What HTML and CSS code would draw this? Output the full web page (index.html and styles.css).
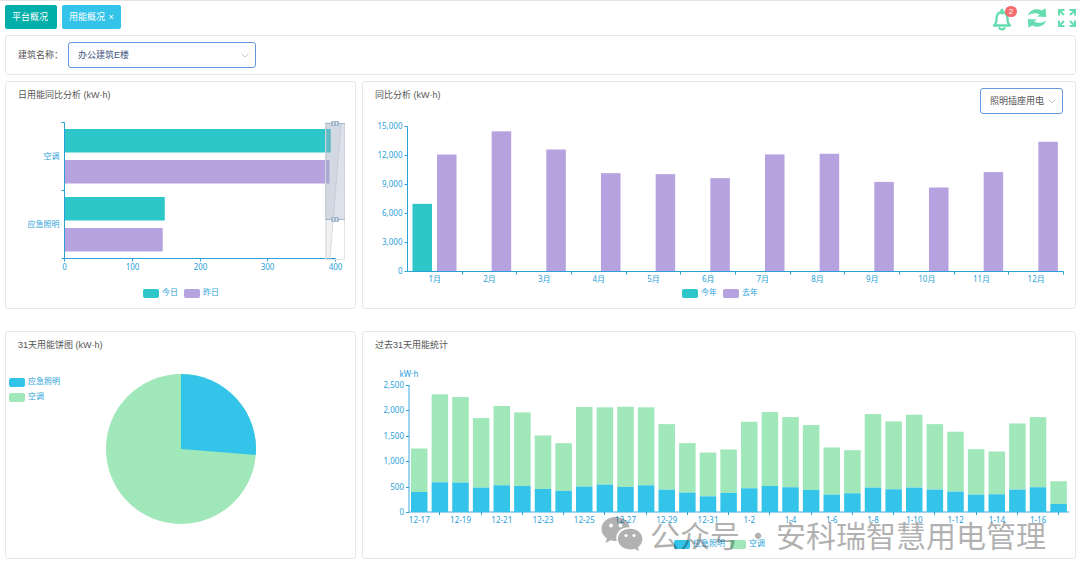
FILE: index.html
```html
<!DOCTYPE html>
<html lang="zh-CN">
<head>
<meta charset="utf-8">
<meta name="viewport" content="width=device-width, initial-scale=1">
<title>用能概况</title>
<link rel="stylesheet" href="styles.css">
</head>
<body>
<header class="topbar">
  <nav class="tabs">
    <button class="tab tab-home" type="button">平台概况</button>
    <button class="tab tab-current" type="button">用能概况 <span class="tab-close">×</span></button>
  </nav>
  <div class="tools">
    <button class="tool" type="button" aria-label="消息">
      <svg viewBox="0 0 20 24" width="20" height="24" fill="none" stroke="currentColor" stroke-width="2.4" stroke-linejoin="round">
        <path d="M2 17.500C4 16 4.500 14 4.500 10.500C4.500 6.500 6.500 4.300 10 4.300C13.500 4.300 15.500 6.500 15.500 10.500C15.500 14 16 16 18 17.500Z"/>
        <path d="M10 2.200V5" stroke-width="3.200" stroke-linecap="round"/>
        <path d="M6.800 19.500Q10 23.500 13.200 19.500" stroke-width="2.400"/>
      </svg>
      <span class="badge">2</span>
    </button>
    <button class="tool" type="button" aria-label="刷新">
      <svg viewBox="0 0 20 20" width="20" height="20" fill="currentColor">
        <path d="M0.800 7.500C3 1.500 9 -0.200 14.800 2.600L18.600 0.200L19.200 9L10 8.600L12.800 6.400C9 4.400 4.500 5 0.800 7.500Z"/>
        <path d="M19.200 12.500C17 18.500 11 20.200 5.200 17.400L1.400 19.800L0.800 11L10 11.400L7.200 13.600C11 15.600 15.500 15 19.200 12.500Z"/>
      </svg>
    </button>
    <button class="tool" type="button" aria-label="全屏">
      <svg viewBox="0 0 20 20" width="20" height="20" fill="none" stroke="currentColor" stroke-width="2">
        <path d="M2 7.500V2H7.500M2.500 2.500L7 7M12.500 2H18V7.500M17.500 2.500L13 7M2 12.500V18H7.500M2.500 17.500L7 13M12.500 18H18V12.500M17.500 17.500L13 13"/>
      </svg>
    </button>
  </div>
</header>

<main class="page">
  <section class="panel filter">
    <label for="building">建筑名称：</label>
    <div class="picker picker-wide">
      <select id="building"><option>办公建筑E楼</option></select>
      <svg class="chevron" viewBox="0 0 8 5" width="8" height="5"><path d="M0.500 0.500L4 4L7.500 0.500"/></svg>
    </div>
  </section>

  <div class="charts">
    <section class="panel">
      <h2>日用能同比分析 (kW·h)</h2>
      <svg class="chart" id="daily" viewBox="0 0 349 200" role="img" aria-label="日用能同比分析"></svg>
    </section>
    <section class="panel">
      <h2>同比分析 (kW·h)</h2>
      <div class="picker picker-corner">
        <select aria-label="用电类型"><option>照明插座用电</option></select>
        <svg class="chevron" viewBox="0 0 8 5" width="8" height="5"><path d="M0.500 0.500L4 4L7.500 0.500"/></svg>
      </div>
      <svg class="chart" id="yearly" viewBox="0 0 712 200" role="img" aria-label="同比分析"></svg>
    </section>
    <section class="panel">
      <h2>31天用能饼图 (kW·h)</h2>
      <svg class="chart" id="share" viewBox="0 0 349 200" role="img" aria-label="31天用能饼图"></svg>
    </section>
    <section class="panel">
      <h2>过去31天用能统计</h2>
      <svg class="chart" id="history" viewBox="0 0 712 200" role="img" aria-label="过去31天用能统计"></svg>
      <div class="watermark">
        <svg viewBox="0 0 42 36" width="42" height="36">
          <path fill="#000" d="M14.500 1C6.500 1 0.500 6 0.500 13C0.500 17 2.500 20.200 5.800 22.300L4.500 27L9.800 24.300C11.800 25 13.800 25.200 15.800 25C13.500 17 19.500 11 28.500 11.200C27.500 5 21.500 1 14.500 1Z"/>
          <path fill="#000" d="M29 12.800C21.800 12.800 16.900 17.300 16.900 23.100C16.900 28.900 21.800 33.400 29 33.400C30.700 33.400 32.200 33.100 33.600 32.700L38 35.200L36.900 31.200C39.800 29.200 41.400 26.300 41.400 23.100C41.400 17.300 36.200 12.800 29 12.800Z"/>
          <g fill="#fff"><circle cx="10" cy="9.500" r="1.900"/><circle cx="19.500" cy="9.500" r="1.900"/><circle cx="25" cy="19.500" r="1.600"/><circle cx="33" cy="19.500" r="1.600"/></g>
        </svg>
        <span>公众号</span><span>·</span><span>安科瑞智慧用电管理</span>
      </div>
    </section>
  </div>
</main>
<script src="charts.js"></script>
</body>
</html>
```

FILE: styles.css
```css
* { box-sizing: border-box; }

body {
  margin: 0;
  background: #fff;
  color: #555;
  font: 9px/12px "Liberation Sans", "Noto Sans CJK SC", sans-serif;
}

button, select { font: inherit; }

.topbar {
  display: flex;
  justify-content: space-between;
  align-items: flex-start;
  height: 35px;
  padding: 4px 3px 0 5px;
  border-top: 1px solid #e4e4e4;
}

.tabs { display: flex; gap: 5px; }

.tab {
  height: 24px;
  padding: 0 7px;
  border: 0;
  border-radius: 2px;
  color: #fff;
  white-space: nowrap;
}
.tab-home { padding-right: 9px; background: #00aeaa; }
.tab-current { background: #34c4ea; }
.tab-close { margin-left: 1px; }

.tools { display: flex; gap: 10px; color: #66ddb0; padding-top: 3px; }

.tool {
  position: relative;
  display: flex;
  height: 24px;
  padding: 0;
  border: 0;
  background: none;
  color: inherit;
}
.tool:first-child { margin-right: 5px; }

.badge {
  position: absolute;
  top: -2px;
  right: -5px;
  width: 12px;
  height: 11px;
  border-radius: 6px;
  background: #f56c6c;
  color: #fff;
  font-size: 8px;
  line-height: 11px;
  text-align: center;
}

.page { padding: 0 4px 20px 5px; }

.panel {
  position: relative;
  min-width: 0;
  border: 1px solid #e6e8ea;
  border-radius: 3px;
  background: #fff;
}

.filter {
  display: flex;
  align-items: center;
  gap: 5px;
  padding: 6px 12px;
  margin-bottom: 6px;
}

.picker { position: relative; }
.picker-wide { width: 188px; }
.picker-corner { position: absolute; top: 6px; right: 12px; width: 83px; }

.picker select {
  display: block;
  width: 100%;
  height: 26px;
  padding: 0 16px 0 9px;
  border: 1px solid #6497dc;
  border-radius: 3px;
  background: #fff;
  color: #555;
  appearance: none;
}
.picker-wide select { color: #3f5680; }

.chevron {
  position: absolute;
  top: 11px;
  right: 7px;
  fill: none;
  stroke: #c0c4cc;
  pointer-events: none;
}

.charts {
  display: grid;
  grid-template-columns: 351fr 714fr;
  gap: 22px 6px;
}

h2 {
  margin: 0;
  padding: 7px 12px;
  font-size: 9px;
  font-weight: 400;
  line-height: 12px;
}

.chart {
  display: block;
  width: 100%;
  height: auto;
  font: 8px "Noto Sans", "Noto Sans CJK SC", sans-serif;
}
.chart text { fill: #2b9fd8; }
.chart .axis { stroke: #2b9fd8; fill: none; }
.chart .axis-soft { stroke: #9fd4f0; stroke-width: 2; }
.chart .teal { fill: #2ec7c9; }
.chart .purple { fill: #b6a2de; }
.chart .blue { fill: #34c4ea; }
.chart .green { fill: #a0e7b9; }
.chart .track { fill: #2f4554; fill-opacity: 0.08; stroke: #ccd0d4; stroke-opacity: 0.7; }
.chart .window { fill: #a7b7cc; fill-opacity: 0.4; }
.chart .grip { fill: #a7b7cc; }
.chart .frame { fill: none; stroke: #e2e4e8; }

.watermark {
  position: absolute;
  right: 29px;
  bottom: 6px;
  display: flex;
  align-items: center;
  gap: 3px;
  color: #000;
  opacity: 0.3;
  font: 30px/36px "Noto Sans CJK SC", sans-serif;
  white-space: nowrap;
  pointer-events: none;
}
.watermark svg { margin-right: 4px; }
```

FILE: charts.js
```js
const NS = "http://www.w3.org/2000/svg";

function add(svg, tag, attrs, text) {
  const el = document.createElementNS(NS, tag);
  for (const key in attrs) el.setAttribute(key, attrs[key]);
  if (text !== undefined) el.textContent = text;
  svg.appendChild(el);
  return el;
}

function bar(svg, cls, x, y, width, height) {
  add(svg, "rect", { class: cls, x, y, width, height });
}

function label(svg, x, y, text, anchor) {
  add(svg, "text", { x, y: y + 3, "text-anchor": anchor || "middle" }, text);
}

function legend(svg, items) {
  items.forEach(([cls, text, x, y]) => {
    add(svg, "rect", { class: cls, x, y: y - 4, width: 16, height: 9, rx: 2 });
    label(svg, x + 19, y - 1, text, "start");
  });
}

function axis(svg, d, soft) {
  add(svg, "path", { class: soft ? "axis axis-soft" : "axis", d });
}

function drawDaily() {
  const svg = document.getElementById("daily");
  const left = 58.5, top = 14.5, bottom = 150.5, unit = 271 / 400, step = 68;
  const rows = [["空调", 393, 391], ["应急照明", 148, 145]];
  rows.forEach(([name, today, yesterday], i) => {
    const y = top + i * step;
    bar(svg, "teal", left, y + 6.5, today * unit, 23.5);
    bar(svg, "purple", left, y + 37.5, yesterday * unit, 23.5);
    label(svg, left - 5, y + 33, name, "end");
  });
  let d = `M${left} ${top}V${bottom}H${left + 271}`;
  for (let i = 0; i < 3; i++) d += `M${left - 3} ${top + i * step}H${left}`;
  for (let v = 0; v <= 400; v += 100) {
    const x = Math.floor(left + v * unit) + 0.5;
    d += `M${x} ${bottom}v3`;
    label(svg, x, bottom + 8, v);
  }
  axis(svg, d);
  add(svg, "path", { class: "track", d: "M320 15H335L324 151H320Z" });
  add(svg, "rect", { class: "frame", x: 319.5, y: 15.5, width: 19, height: 136 });
  add(svg, "rect", { class: "window", x: 319, y: 15, width: 20, height: 96 });
  [15, 111].forEach((y) => {
    add(svg, "rect", { class: "grip", x: 319, y: y, width: 20, height: 1 });
    add(svg, "rect", { class: "grip", x: 325, y: y - 2, width: 8, height: 5, rx: 1 });
    add(svg, "path", { d: `M327.5 ${y - 1}v3M330.5 ${y - 1}v3`, stroke: "#e3e9f1" });
  });
  legend(svg, [["teal", "今日", 137, 185], ["purple", "昨日", 178, 185]]);
}

function drawYearly() {
  const svg = document.getElementById("yearly");
  const left = 44.5, top = 18.5, bottom = 163.5, width = 656, step = width / 12;
  const unit = (bottom - top) / 15000;
  const thisYear = [7000];
  const lastYear = [12100, 14500, 12620, 10170, 10070, 9660, 12110, 12180, 9270, 8690, 10280, 13420];
  let d = `M${left} ${top}V${bottom}H${left + width}`;
  lastYear.forEach((value, i) => {
    const x = left + i * step;
    if (thisYear[i]) bar(svg, "teal", x + 5, bottom - thisYear[i] * unit, 19.5, thisYear[i] * unit);
    bar(svg, "purple", x + 29.5, bottom - value * unit, 19.5, value * unit);
    label(svg, x + step / 2, bottom + 7, `${i + 1}月`);
    d += `M${Math.floor(x + step) + 0.5} ${bottom}v3`;
  });
  for (let v = 0; v <= 15000; v += 3000) {
    const y = bottom - v * unit;
    d += `M${left - 3} ${y}h3`;
    label(svg, left - 5, y - 1, v.toLocaleString("en-US"), "end");
  }
  axis(svg, d);
  legend(svg, [["teal", "今年", 319, 185], ["purple", "去年", 360, 185]]);
}

function drawShare() {
  const svg = document.getElementById("share");
  const cx = 175, cy = 91, r = 75, angle = 0.263 * 2 * Math.PI;
  const x = cx + r * Math.sin(angle), y = cy - r * Math.cos(angle);
  add(svg, "circle", { class: "green", cx, cy, r });
  add(svg, "path", { class: "blue", d: `M${cx} ${cy}V${cy - r}A${r} ${r} 0 0 1 ${x} ${y}Z` });
  legend(svg, [["blue", "应急照明", 3, 24], ["green", "空调", 3, 39]]);
}

function drawHistory() {
  const svg = document.getElementById("history");
  const left = 46, top = 27, bottom = 154, width = 660, step = width / 32;
  const unit = (bottom - top) / 2500;
  const total = [1250, 2316, 2263, 1849, 2086, 1960, 1507, 1355, 2066, 2060, 2072, 2060, 1730, 1355, 1170, 1230,
    1776, 1967, 1868, 1711, 1270, 1217, 1928, 1783, 1915, 1730, 1580, 1237, 1191, 1743, 1868, 605];
  const lighting = [395, 585, 579, 480, 526, 513, 454, 415, 500, 540, 493, 526, 440, 382, 309, 375,
    467, 513, 487, 434, 342, 368, 480, 447, 480, 441, 401, 342, 349, 441, 487, 158];
  axis(svg, `M${left} ${top}V${bottom}H${left + width}`, true);
  let d = "";
  total.forEach((value, i) => {
    const x = left + i * step, mid = x + step / 2;
    bar(svg, "green", x + 2, bottom - value * unit, 16.5, (value - lighting[i]) * unit);
    bar(svg, "blue", x + 2, bottom - lighting[i] * unit, 16.5, lighting[i] * unit);
    if (i % 2) d += `M${Math.floor(mid) + 0.5} ${bottom}v3`;
    else label(svg, mid, bottom + 8, i < 15 ? `12-${17 + i}` : `1-${i - 14}`);
  });
  for (let v = 0; v <= 2500; v += 500) {
    const y = Math.round(bottom - v * unit) + 0.5;
    d += `M${left - 3} ${y}h3`;
    label(svg, left - 5, y - 1, v.toLocaleString("en-US"), "end");
  }
  axis(svg, d);
  label(svg, left, top - 11, "kW·h");
  legend(svg, [["blue", "应急照明", 311, 186], ["green", "空调", 367, 186]]);
}

drawDaily();
drawYearly();
drawShare();
drawHistory();
```
